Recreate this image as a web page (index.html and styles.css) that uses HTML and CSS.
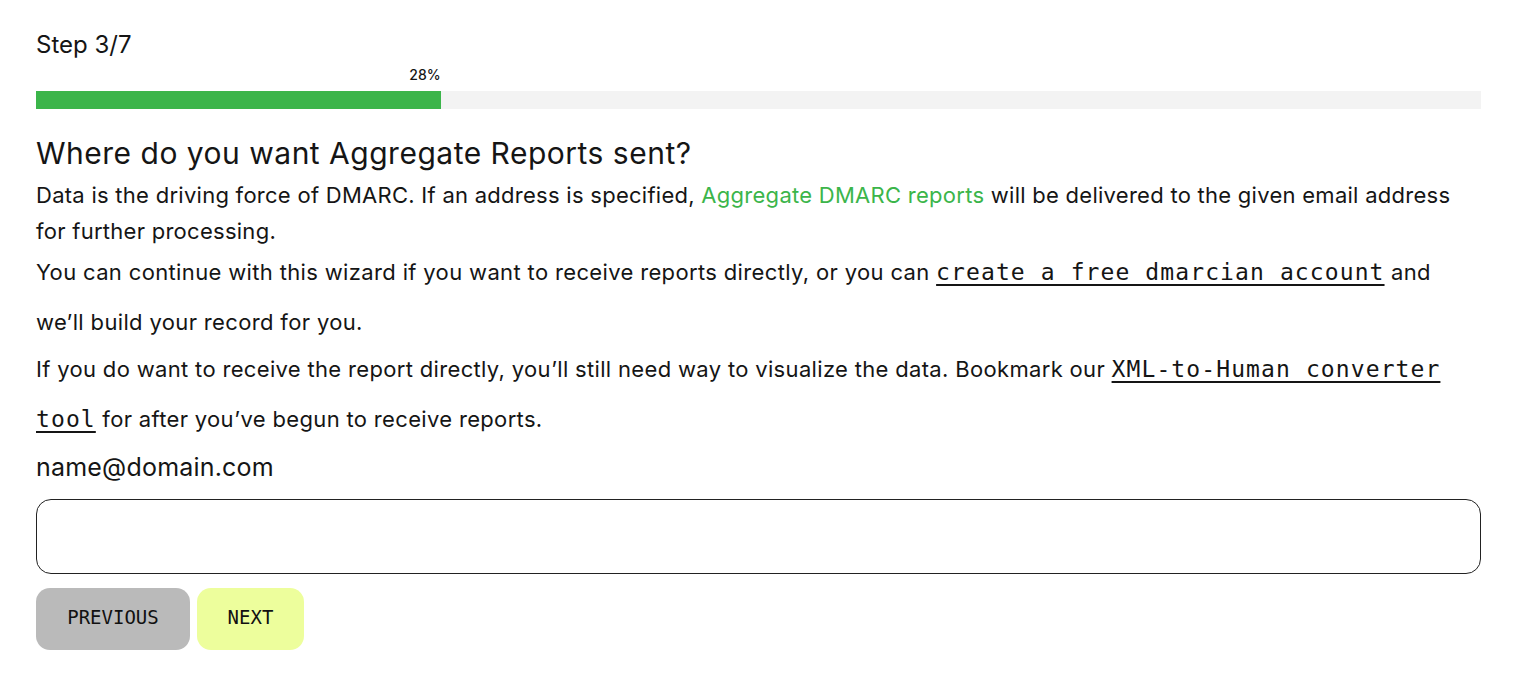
FILE: index.html
```html
<!DOCTYPE html>
<html lang="en">
<head>
<meta charset="utf-8">
<title>DMARC wizard</title>
<link rel="stylesheet" href="styles.css">
</head>
<body>
<main class="wizard">
  <div class="step">Step 3/7</div>
  <div class="progress">
    <div class="progress-label" style="width:28%">28%</div>
    <div class="progress-track"><div class="progress-fill" style="width:28%"></div></div>
  </div>
  <h1 class="question">Where do you want Aggregate Reports sent?</h1>
  <p class="text text-first">Data is the driving force of DMARC. If an address is specified, <a class="green-link" href="#">Aggregate DMARC reports</a> will be delivered to the given email address for further processing.</p>
  <p class="text text-tall text-second">You can continue with this wizard if you want to receive reports directly, or you can <a class="mono-link" href="#">create a free dmarcian account</a> and we’ll build your record for you.</p>
  <p class="text text-tall text-third">If you do want to receive the report directly, you’ll still need way to visualize the data. Bookmark our <a class="mono-link" href="#">XML-to-Human converter tool</a> for after you’ve begun to receive reports.</p>
  <label class="field-label" for="email">name@domain.com</label>
  <input class="field" id="email" type="email">
  <div class="actions">
    <button class="btn btn-prev" type="button">PREVIOUS</button>
    <button class="btn btn-next" type="button">NEXT</button>
  </div>
</main>
</body>
</html>
```
FILE: styles.css
```css
html, body {
  margin: 0;
  padding: 0;
  background: #ffffff;
}
body {
  font-family: Inter, "Liberation Sans", sans-serif;
  color: #151515;
}
.wizard {
  display: flex;
  flex-direction: column;
  padding: 30px 39px 0 36px;
}
.step {
  font-size: 24px;
  line-height: 30px;
}
.progress {
  margin-top: 7px;
}
.progress-label {
  font-size: 14px;
  line-height: 16px;
  font-weight: 500;
  text-align: right;
}
.progress-track {
  margin-top: 8px;
  height: 18px;
  background: #f3f3f3;
}
.progress-fill {
  height: 100%;
  background: #3bb54a;
}
.question {
  margin: 24px 0 0;
  font-size: 30px;
  line-height: 40px;
  font-weight: 400;
  letter-spacing: 0.5px;
}
.text {
  margin: 0;
  font-size: 22px;
  line-height: 36px;
  letter-spacing: 0.27px;
}
.text-first { margin-top: 4px; }
.text-tall { line-height: 50px; }
.text-second {
  margin-top: -2px;
  letter-spacing: 0.35px;
}
.text-third {
  margin-top: -3px;
  letter-spacing: 0.33px;
}
.green-link {
  color: #3bb54a;
  text-decoration: none;
}
.mono-link {
  font-family: "DejaVu Sans Mono", "Liberation Mono", monospace;
  font-size: 23px;
  letter-spacing: 1.1px;
  color: #151515;
  text-decoration: underline;
  text-decoration-thickness: 2px;
  text-underline-offset: 4px;
}
.field-label {
  margin-top: 7px;
  font-size: 25px;
  line-height: 32px;
  letter-spacing: 0.2px;
}
.field {
  margin: 16px 0 0;
  height: 75px;
  box-sizing: border-box;
  border: 1.5px solid #222;
  border-radius: 15px;
  padding: 0 16px;
  font-size: 22px;
  background: #fff;
}
.actions {
  display: flex;
  gap: 7px;
  margin-top: 14px;
}
.btn {
  height: 62px;
  border: 0;
  border-radius: 14px;
  font-family: "DejaVu Sans Mono", "Liberation Mono", monospace;
  font-size: 19px;
  color: #111;
  padding: 0 0 4px;
}
.btn-prev {
  width: 154px;
  background: #bababa;
}
.btn-next {
  width: 107px;
  background: #edfe9c;
}
```
